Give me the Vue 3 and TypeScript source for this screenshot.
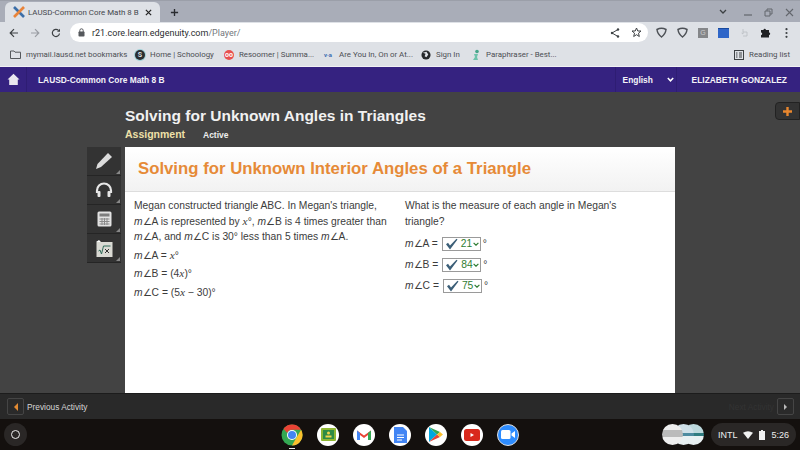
<script setup lang="ts">
const bookmarks = [
  { label: 'mymail.lausd.net bookmarks', kind: 'folder', w: 125 },
  { label: 'Home | Schoology', kind: 'school', w: 89 },
  { label: 'Resoomer | Summa...', kind: 'res', w: 98 },
  { label: 'Are You In, On or At...', kind: 'va', w: 99 },
  { label: 'Sign In', kind: 'globe', w: 50 },
  { label: 'Paraphraser - Best...', kind: 'para', w: 90 },
]
const answers = [
  { name: 'A', val: '21' },
  { name: 'B', val: '84' },
  { name: 'C', val: '75' },
]
</script>

<template>
  <div class="screen">
    <div class="tabstrip">
      <div class="tab">
        <svg class="fav" width="12" height="12" viewBox="0 0 12 12"><path d="M1 1l10 10" stroke="#3b6ea8" stroke-width="2.6"/><path d="M11 1L1 11" stroke="#e8833a" stroke-width="2.6"/></svg>
        <span class="tabtitle">LAUSD-Common Core Math 8 B</span>
        <svg class="tabx" width="7" height="7" viewBox="0 0 8 8"><path d="M1 1l6 6M7 1L1 7" stroke="#222" stroke-width="1.4"/></svg>
      </div>
      <svg class="newtab" width="9" height="9" viewBox="0 0 10 10"><path d="M5 1v8M1 5h8" stroke="#2a2c30" stroke-width="1.5"/></svg>
      <div class="winctl">
        <svg width="8" height="6" viewBox="0 0 8 6"><path d="M1 1l3 3 3-3" fill="none" stroke="#3c4043" stroke-width="1.3"/></svg>
        <svg class="min" width="8" height="8" viewBox="0 0 8 8"><path d="M0 7h8" stroke="#63666c" stroke-width="1.2"/></svg>
        <svg width="9" height="9" viewBox="0 0 9 9"><path d="M1 3h5v5H1zM3 3V1h5v5H6" fill="none" stroke="#63666c"/></svg>
        <svg width="9" height="9" viewBox="0 0 9 9"><path d="M1 1l7 7M8 1L1 8" stroke="#63666c" stroke-width="1.1"/></svg>
      </div>
    </div>

    <div class="toolbar">
      <svg width="10" height="10" viewBox="0 0 10 10"><path d="M9 5H1.5M5 1.2L1.2 5 5 8.800" fill="none" stroke="#3c4043" stroke-width="1.2"/></svg>
      <svg width="10" height="10" viewBox="0 0 10 10"><path d="M1 5h7.500M5 1.200L8.800 5 5 8.800" fill="none" stroke="#9a9da3" stroke-width="1.2"/></svg>
      <svg width="10" height="10" viewBox="0 0 10 10"><path d="M8.500 5.500A3.600 3.600 0 1 1 7.500 2.400" fill="none" stroke="#3c4043" stroke-width="1.2"/><path d="M9 .8v3H6z" fill="#3c4043"/></svg>
      <div class="omnibox">
        <svg width="7" height="9" viewBox="0 0 7 9"><rect x=".5" y="3.500" width="6" height="5" rx=".8" fill="#55585c"/><path d="M1.800 4V2.500a1.700 1.700 0 0 1 3.400 0V4" fill="none" stroke="#55585c"/></svg>
        <span class="url">r21.core.learn.edgenuity.com<span class="urlpath">/Player/</span></span>
        <svg class="share" width="10" height="10" viewBox="0 0 10 10"><path d="M8 1.500L2 5l6 3.500" fill="none" stroke="#3c4043" stroke-width="1"/><circle cx="8" cy="1.500" r="1.200" fill="#3c4043"/><circle cx="2" cy="5" r="1.200" fill="#3c4043"/><circle cx="8" cy="8.500" r="1.200" fill="#3c4043"/></svg>
        <svg width="11" height="11" viewBox="0 0 11 11"><path d="M5.500 1l1.300 3H10L7.500 6.200l.8 3.300-2.800-1.800-2.800 1.800.8-3.300L1 4h3.200z" fill="none" stroke="#3c4043"/></svg>
      </div>
      <div class="exts">
        <svg width="11" height="11" viewBox="0 0 11 11"><path d="M1 2.500Q5.500 0 10 2.500 9.500 7 5.500 10 1.500 7 1 2.500z" fill="none" stroke="#4d5156" stroke-width="1.500"/></svg>
        <svg width="11" height="11" viewBox="0 0 11 11"><path d="M1 2.500Q5.500 0 10 2.500 9.500 7 5.500 10 1.500 7 1 2.500z" fill="none" stroke="#4d5156" stroke-width="1.500"/></svg>
        <span class="ext-g">G</span>
        <span class="ext-blue"></span>
        <svg width="11" height="10" viewBox="0 0 9 10"><path d="M3 1v5l-1.500-1M3 4h4v4H3" fill="none" stroke="#b9bcc2" stroke-width=".8"/></svg>
        <svg width="11" height="11" viewBox="0 0 11 11"><path d="M1 3h2.500a1.200 1.200 0 0 1 2.400 0H9v2.600a1.200 1.200 0 0 1 0 2.400V10.500H1V8a1.200 1.200 0 0 0 0-2.400z" fill="#202124"/></svg>
        <svg class="dots" width="3" height="10" viewBox="0 0 3 10"><circle cx="1.500" cy="1.200" r="1.100" fill="#3c4043"/><circle cx="1.500" cy="5" r="1.100" fill="#3c4043"/><circle cx="1.500" cy="8.800" r="1.100" fill="#3c4043"/></svg>
      </div>
    </div>

    <div class="bookmarks">
      <div v-for="b in bookmarks" :key="b.label" class="bm" :style="{ width: b.w + 'px' }">
        <svg v-if="b.kind === 'folder'" width="11" height="9" viewBox="0 0 11 9"><path d="M.500 1h3.500l1 1.200h5.500V8.500H.500z" fill="none" stroke="#55585c"/></svg>
        <span v-else-if="b.kind === 'school'" class="ico school">S</span>
        <span v-else-if="b.kind === 'res'" class="ico res">oo</span>
        <span v-else-if="b.kind === 'va'" class="ico va">v·a</span>
        <svg v-else-if="b.kind === 'globe'" width="10" height="10" viewBox="0 0 11 11"><circle cx="5.500" cy="5.500" r="5" fill="#26282b"/><path d="M2 3l3 1-1 3 2 1 2-3-2-3z" fill="#dee1e6"/></svg>
        <svg v-else width="10" height="11" viewBox="0 0 10 11"><circle cx="6" cy="2.500" r="1.800" fill="#46a58a"/><path d="M3 5h4L6 8l1 3H2l2-3z" fill="#6ec2ab"/></svg>
        <span class="bmtext">{{ b.label }}</span>
      </div>
      <div class="reading">
        <svg width="10" height="10" viewBox="0 0 10 10"><rect x=".5" y=".5" width="9" height="9" fill="none" stroke="#3c4043"/><path d="M2 3h1.500M2 5h1.500M2 7h1.500M5 3h3M5 5h3M5 7h3" stroke="#3c4043"/></svg>
        <span>Reading list</span>
      </div>
    </div>

    <header class="appbar">
      <div class="homecell">
        <svg width="13" height="13" viewBox="0 0 13 13"><path d="M6.500 .8L.5 6.500H2.200V12H10.800V6.500H12.500z" fill="#e9e7ee"/></svg>
      </div>
      <span class="course">LAUSD-Common Core Math 8 B</span>
      <div class="lang"><span class="langname">English</span>
        <svg width="7" height="5" viewBox="0 0 7 5"><path d="M.8 1L3.500 3.800 6.200 1" fill="none" stroke="#fff" stroke-width="1.500"/></svg>
      </div>
      <span class="user">ELIZABETH GONZALEZ</span>
    </header>

    <main class="stage">
      <div class="titlewrap">
        <h1>Solving for Unknown Angles in Triangles</h1>
        <div class="meta"><span class="assign">Assignment</span><span class="active">Active</span></div>
      </div>
      <div class="plus"><svg width="9" height="9" viewBox="0 0 9 9"><path d="M4.500 0v9M0 4.500h9" stroke="#e9872e" stroke-width="2.400"/></svg></div>
      <div class="work">
        <aside class="tools">
          <div class="tool"><svg width="18" height="18" viewBox="0 0 18 18"><path d="M13 1l4 4L6 15l-5 2 1.500-5z" fill="#dcdcdc"/></svg></div>
          <div class="tool"><svg width="18" height="16" viewBox="0 0 18 16"><path d="M2 11V8.500a7 7 0 0 1 14 0V11" fill="none" stroke="#e6e6e6" stroke-width="2.200"/><rect x="2.500" y="9" width="3" height="6" rx="1" fill="#e6e6e6"/><rect x="12.500" y="9" width="3" height="6" rx="1" fill="#e6e6e6"/></svg></div>
          <div class="tool"><svg width="15" height="16" viewBox="0 0 15 16"><rect x=".5" y=".5" width="14" height="15" rx="1.500" fill="#e2e2e2"/><rect x="2.500" y="2.500" width="10" height="3" fill="#7d7d7d"/><path d="M2.500 8h10M2.500 10.500h10M2.500 13h10M5 7v7M7.500 7v7M10 7v7" stroke="#8a8a8a"/></svg></div>
          <div class="tool"><svg width="17" height="17" viewBox="0 0 17 17"><rect x=".5" y="2" width="16" height="15" fill="#d9d9d3"/><path d="M0 2l3-2 2 2z" fill="#fff"/><path d="M2.500 11l1.500-1 1.500 4 2-8h7" fill="none" stroke="#2f6a58"/><path d="M9 9l4 4M13 9l-4 4" stroke="#333"/></svg></div>
        </aside>
        <section class="card">
          <div class="cardhead">Solving for Unknown Interior Angles of a Triangle</div>
          <div class="columns">
            <div class="col left">
              <p class="prob">Megan constructed triangle ABC. In Megan's triangle, <i class="m">m</i>∠A is represented by <i class="x">x</i>°, <i class="m">m</i>∠B is 4 times greater than <i class="m">m</i>∠A, and <i class="m">m</i>∠C is 30° less than 5 times <i class="m">m</i>∠A.</p>
              <p class="eq"><i class="m">m</i>∠A = <i class="x">x</i>°</p>
              <p class="eq"><i class="m">m</i>∠B = (4<i class="x">x</i>)°</p>
              <p class="eq"><i class="m">m</i>∠C = (5<i class="x">x</i> − 30)°</p>
            </div>
            <div class="col right">
              <p class="prob">What is the measure of each angle in Megan's triangle?</p>
              <div v-for="a in answers" :key="a.name" class="ans">
                <span class="lbl"><i class="m">m</i>∠{{ a.name }} =</span>
                <span class="sel">
                  <svg width="13" height="12" viewBox="0 0 13 12"><path d="M1 6.200l2-1.400 2 2.600L11.500 .8 12.500 1.600 5 11.500z" fill="#3c5f78"/></svg>
                  <span class="val">{{ a.val }}</span>
                  <svg width="6" height="4" viewBox="0 0 6 4"><path d="M.6 .8L3 3.200 5.400 .8" fill="none" stroke="#2e7d32" stroke-width="1.200"/></svg>
                </span>
                <span class="deg">°</span>
              </div>
            </div>
          </div>
        </section>
      </div>
    </main>

    <footer class="activitybar">
      <div class="nav"><span class="navbtn"><i class="tri-l"></i></span><span>Previous Activity</span></div>
      <div class="nav"><span class="next">Next Activity</span><span class="navbtn"><i class="tri-r"></i></span></div>
    </footer>

    <div class="shelf">
      <div class="launcher"><i></i></div>
      <div class="apps">
        <span class="app chrome"><svg width="22" height="22" viewBox="0 0 22 22"><circle cx="11" cy="11" r="10.500" fill="#34a853"/><path d="M11 .5a10.500 10.500 0 0 1 9.100 5.250H11A5.250 5.250 0 0 0 6.200 9L2.500 4.800A10.500 10.500 0 0 1 11 .5z" fill="#ea4335"/><path d="M20.100 5.750A10.500 10.500 0 0 1 11 21.500l4.500-8z" fill="#fbc02d"/><circle cx="11" cy="11" r="5" fill="#fff"/><circle cx="11" cy="11" r="4" fill="#4285f4"/></svg><em></em></span>
        <span class="app white"><svg width="15" height="13" viewBox="0 0 15 13"><rect width="15" height="13" rx="1" fill="#8fb733"/><rect x="2" y="2" width="11" height="9" fill="#2e8b45"/><circle cx="7.500" cy="5" r="1.500" fill="#f2d34c"/><rect x="4.500" y="7.500" width="6" height="2" fill="#f2d34c"/></svg></span>
        <span class="app white"><svg width="14" height="11" viewBox="0 0 14 11"><path d="M0 11V1.500L7 6.500 14 1.500V11h-3V6L7 9 3 6v5z" fill="#ea4335"/><path d="M0 11V1.500L3 4v7z" fill="#4285f4"/><path d="M14 11V1.500L11 4v7z" fill="#34a853"/></svg></span>
        <span class="app white"><svg width="13" height="16" viewBox="0 0 13 16"><path d="M0 0h9l4 4v12H0z" fill="#4285f4"/><path d="M3 8h7M3 10.500h7M3 13h5" stroke="#fff"/></svg></span>
        <span class="app white"><svg width="14" height="15" viewBox="0 0 14 15"><path d="M0 0l8 7.500L0 15z" fill="#00a7e1"/><path d="M0 0l11 5-3 2.500z" fill="#34a853"/><path d="M0 15l11-5-3-2.500z" fill="#ea4335"/><path d="M11 5l3 2.500-3 2.500-3-2.500z" fill="#fbc02d"/></svg></span>
        <span class="app white"><svg width="16" height="12" viewBox="0 0 16 12"><rect width="16" height="12" rx="2.500" fill="#d9291c"/><path d="M6.500 4l3.500 2-3.500 2z" fill="#fff"/></svg></span>
        <span class="app zoom"><svg width="14" height="9" viewBox="0 0 14 9"><rect width="9.500" height="9" rx="1.500" fill="#fff"/><path d="M10.500 3.500L14 1v7l-3.500-2.500z" fill="#fff"/></svg></span>
      </div>
      <div class="thumbs">
        <span class="thumb t3"></span><span class="thumb t2"></span><span class="thumb t1"></span>
      </div>
      <div class="tray">
        <span>INTL</span>
        <svg width="10" height="8" viewBox="0 0 10 8"><path d="M0 1.800Q5-1.500 10 1.800L5 8z" fill="#f1f1f1"/></svg>
        <svg width="6" height="10" viewBox="0 0 6 10"><path d="M2 0h2v1h2v9H0V1h2z" fill="#f1f1f1"/></svg>
        <span>5:26</span>
      </div>
    </div>
  </div>
</template>

<style>
html, body { margin: 0; background: #434343; }
</style>

<style scoped>
.screen { width: 800px; height: 450px; overflow: hidden; display: flex; flex-direction: column; font-family: "Liberation Sans", Arial, sans-serif; background: #434343; }
svg { display: block; flex: none; }
p, h1 { margin: 0; }

.tabstrip { height: 22px; background: #a9adb8; display: flex; align-items: flex-end; padding-left: 5px; position: relative; border-top: 1px solid #9b9fa9; box-sizing: border-box; }
.tab { width: 155px; height: 20px; background: #dee1e6; border-radius: 6px 6px 0 0; display: flex; align-items: center; padding-left: 8px; box-sizing: border-box; }
.tabtitle { width: 114px; margin-left: 3px; font-family: Roboto, sans-serif; font-size: 7.900px; color: #43464b; white-space: nowrap; }
.tabx { margin-left: 3px; }
.newtab { margin: 0 0 5px 10px; }
.winctl { margin-left: auto; display: flex; align-items: center; gap: 12px; height: 20px; padding-right: 6px; }
.min { margin-left: 5px; }

.toolbar { height: 21px; background: #dee1e6; display: flex; align-items: center; padding-left: 9px; gap: 11px; }
.omnibox { flex: 1; height: 19px; margin-left: -2px; border-radius: 10px; background: #fff; display: flex; align-items: center; padding: 0 6px 0 8px; gap: 7px; }
.url { font-family: Roboto, sans-serif; font-size: 9px; color: #2b2d30; }
.urlpath { color: #74777c; }
.share { margin-left: auto; margin-right: 4px; }
.exts { display: flex; align-items: center; gap: 10px; width: 144px; margin-left: -3px; box-sizing: border-box; }
.dots { margin-left: 4px; }
.ext-g { width: 10px; height: 10px; background: #85878a; color: #ccc; font-size: 7px; line-height: 10px; text-align: center; }
.ext-blue { width: 11px; height: 9px; background: #2f66c8; border-top: 1px solid #184a9e; }

.bookmarks { height: 23px; background: #dee1e6; display: flex; align-items: center; padding-left: 10px; font-family: Roboto, sans-serif; font-size: 7.900px; color: #4b4e53; border-bottom: 1px solid #f1f1f4; white-space: nowrap; }
.bm { display: flex; align-items: center; gap: 4px; flex: none; }
.bmtext { margin-left: 1px; }
.ico { width: 10px; height: 10px; flex: none; border-radius: 50%; font-size: 7px; line-height: 10px; text-align: center; font-weight: bold; }
.school { background: #2b2e31; color: #dee1e6; box-shadow: 0 0 0 1px #9fd1d8; }
.res { background: #e8504f; color: #fff; }
.va { background: transparent; color: #3a6bb0; width: 12px; font-size: 6px; border-radius: 0; }
.reading { margin-left: auto; display: flex; gap: 5px; align-items: center; padding-right: 10px; }

.appbar { height: 25px; background: #352280; color: #f4f3f8; display: flex; align-items: center; font-size: 8.400px; font-weight: bold; }
.homecell { width: 27px; height: 25px; display: flex; align-items: center; justify-content: center; border-right: 1px solid #2e1d73; box-sizing: border-box; }
.course { margin-left: 11px; }
.lang { margin-left: auto; display: flex; align-items: center; width: 62px; height: 25px; border-left: 1px solid #2e1d73; border-right: 1px solid #2e1d73; padding-left: 7px; box-sizing: border-box; }
.langname { width: 44px; }
.user { margin-left: 15px; margin-right: 13px; }

.stage { flex: 1; position: relative; background: #434343; min-height: 0; display: flex; flex-direction: column; }
.titlewrap { padding: 15px 0 0 125px; height: 55px; box-sizing: border-box; }
h1 { font-size: 15.500px; line-height: 18px; font-weight: bold; color: #f1f1f1; }
.meta { display: flex; align-items: baseline; margin-top: 3px; font-weight: bold; }
.assign { font-size: 10.500px; color: #eee0a8; width: 78px; }
.active { font-size: 8.500px; color: #eee; }
.plus { position: absolute; right: 0; top: 10px; width: 25px; height: 18px; background: #333; border: 1px solid #222; border-radius: 4px 0 0 4px; box-sizing: border-box; display: flex; align-items: center; justify-content: center; }
.work { flex: 1; display: flex; padding-left: 87px; min-height: 0; }
.tools { width: 34px; margin-right: 4px; display: flex; flex-direction: column; align-self: flex-start; }
.tool { height: 29px; background: #333; border-bottom: 1px solid #252525; display: flex; align-items: center; justify-content: center; position: relative; box-sizing: border-box; }
.tool::after { content: ""; position: absolute; right: 1px; bottom: 1px; border: 2px solid transparent; border-right-color: #888; border-bottom-color: #888; }
.card { width: 550px; background: #fff; display: flex; flex-direction: column; }
.cardhead { height: 45px; box-sizing: border-box; padding: 12px 0 0 13px; font-size: 16.750px; line-height: 20px; font-weight: bold; color: #e68a37; background: linear-gradient(#fff, #f2f2f2); border-bottom: 1px solid #ddd; }
.columns { display: flex; padding-top: 6px; font-size: 10.300px; line-height: 15.500px; color: #3c3c3c; }
.col { box-sizing: border-box; }
.left { width: 271px; padding-left: 9px; padding-right: 9px; }
.right { width: 270px; padding-left: 9px; padding-right: 30px; }
.prob { margin-bottom: 1px; }
.eq { height: 18.500px; line-height: 18.500px; }
.m { font-style: italic; }
.x { font-family: "Liberation Serif", serif; font-style: italic; font-size: 1.100em; }
.ans { display: flex; align-items: center; height: 21px; gap: 3px; }
.ans:first-of-type { margin-top: 4px; }
.sel { width: 39px; height: 14px; margin-left: 1px; border: 1px solid #9a9a9a; box-sizing: border-box; display: flex; align-items: center; padding-left: 2px; }
.val { color: #2e7d32; width: 11px; margin: 0 1px 0 3px; }
.deg { margin-left: -1px; }

.activitybar { height: 26px; background: #292929; border-top: 1px solid #1c1c1c; box-sizing: border-box; display: flex; justify-content: space-between; align-items: center; padding: 0 6px 0 7px; font-size: 8.300px; color: #d6d6d6; }
.nav { display: flex; align-items: center; gap: 3px; }
.navbtn { width: 17px; height: 17px; background: #2a2a2a; border: 1px solid #454545; border-radius: 2px; box-sizing: border-box; display: flex; align-items: center; justify-content: center; }
.tri-l { border: 4px solid transparent; border-right-color: #e28a32; border-left-width: 0; }
.tri-r { border: 3px solid transparent; border-left-color: #bbb; border-right-width: 0; }
.next { color: #333; }

.shelf { height: 31px; background: #14100e; display: flex; align-items: center; position: relative; }
.launcher { width: 23px; height: 23px; border-radius: 50%; margin-left: 4px; background: #2a2726; display: flex; align-items: center; justify-content: center; }
.launcher i { width: 7px; height: 7px; border: 1.200px solid #eee; border-radius: 50%; }
.apps { margin-left: 254px; display: flex; gap: 14px; align-items: center; }
.app { width: 22px; height: 22px; border-radius: 50%; display: flex; align-items: center; justify-content: center; position: relative; flex: none; }
.white { background: #fff; }
.chrome em { position: absolute; left: 8px; bottom: -3px; width: 6px; height: 1px; background: #eee; }
.zoom { background: #2d8cff; border: 1px solid #ddd; box-sizing: border-box; }
.thumbs { margin-left: auto; display: flex; width: 42px; position: relative; height: 21px; }
.thumb { position: absolute; top: 0; width: 21px; height: 21px; border-radius: 50%; }
.t1 { left: 0; background: linear-gradient(#eee 30%, #bbb 30%, #bbb 60%, #eee 60%); }
.t2 { left: 11px; background: linear-gradient(#cfe0e8 45%, #4d8ba0 45%, #4d8ba0 55%, #e8f0f2 55%); }
.t3 { left: 21px; background: linear-gradient(#bcd8dc 45%, #2f7c80 45%, #2f7c80 55%, #e8f0f2 55%); }
.tray { margin: 0 4px 0 7px; width: 85px; height: 23px; border-radius: 12px; background: #2a2726; color: #eee; font-size: 9px; display: flex; align-items: center; justify-content: center; gap: 6px; }
</style>
